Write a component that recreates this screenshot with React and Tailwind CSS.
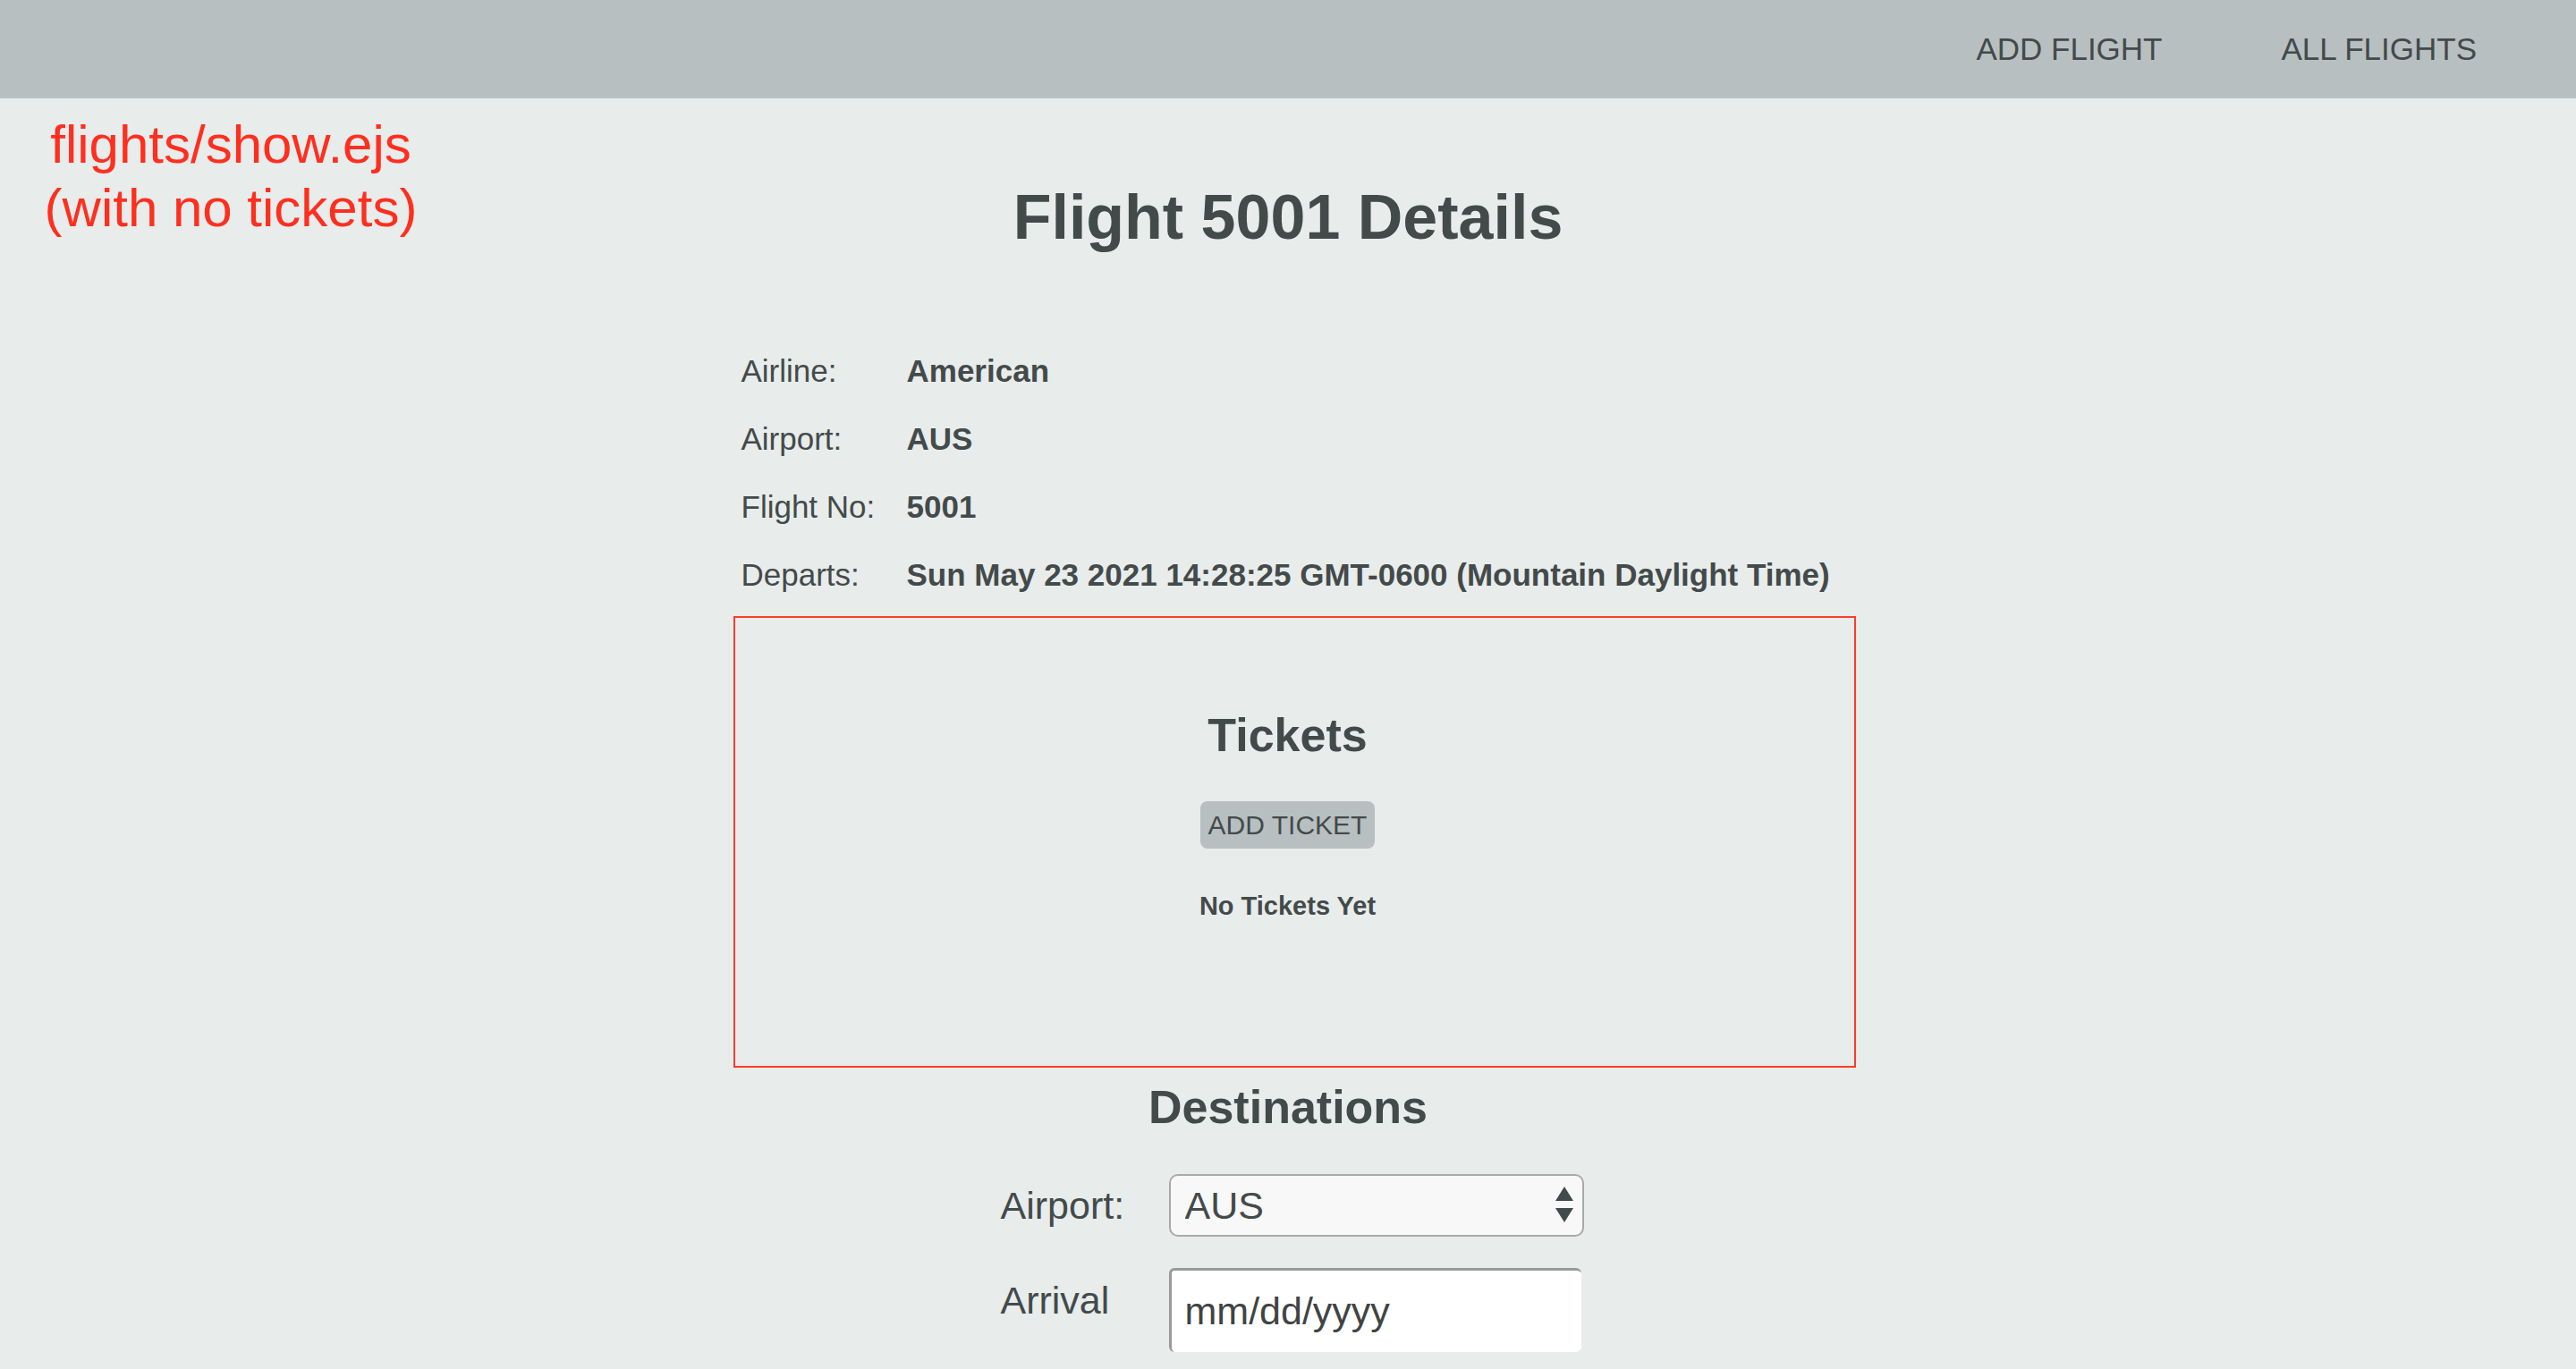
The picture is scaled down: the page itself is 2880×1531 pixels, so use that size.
import React from "react";

export default function App() {
  const font = { fontFamily: '"Liberation Sans", Arial, Helvetica, sans-serif' };
  return (
    <div
      className="relative h-[1531px] w-full overflow-hidden bg-[#e8eceb] text-[#434a4a]"
      style={font}
    >
      <nav className="flex h-[110px] items-center justify-end gap-[133px] bg-[#b8bfc1] pr-[111px] text-[35px] leading-[40px]">
        <a className="cursor-pointer">ADD FLIGHT</a>
        <a className="cursor-pointer">ALL FLIGHTS</a>
      </nav>

      <div className="absolute left-0 top-[126px] w-[516px] text-center text-[60px] leading-[71px] text-[#ff2f1f]">
        <div>flights/show.ejs</div>
        <div>(with no tickets)</div>
      </div>

      <main className="mx-auto w-[1223px]">
        <h1 className="mt-[93px] text-center text-[70px] font-bold leading-[80px]">
          Flight 5001 Details
        </h1>

        <section className="mt-[94px] grid grid-cols-[185px_auto] text-[35px] leading-[76px]">
          <div>Airline:</div>
          <div className="font-bold">American</div>
          <div>Airport:</div>
          <div className="font-bold">AUS</div>
          <div>Flight No:</div>
          <div className="font-bold">5001</div>
          <div>Departs:</div>
          <div className="font-bold">Sun May 23 2021 14:28:25 GMT-0600 (Mountain Daylight Time)</div>
        </section>

        <section className="-ml-[9px] -mr-[23px] mt-[8px] flex h-[505px] flex-col items-center border-2 border-[#ff3b2b] pr-[15px] pt-[101px]">
          <h2 className="text-[52px] font-bold leading-[60px]">Tickets</h2>
          <button className="mt-[44px] flex h-[53px] items-center rounded-[8px] bg-[#b8bfc1] px-[9px] text-[30px] leading-[34px] text-[#434a4a]">
            ADD TICKET
          </button>
          <p className="mt-[47px] text-[29px] font-bold leading-[34px]">No Tickets Yet</p>
        </section>

        <h2 className="mt-[14px] text-center text-[52px] font-bold leading-[60px]">Destinations</h2>

        <form className="ml-[290px] mt-[45px] grid grid-cols-[188px_464px] gap-y-[35px] text-[43px]">
          <label className="self-center leading-[50px]">Airport:</label>
          <div className="relative h-[70px]">
            <select
              className="h-[70px] w-[464px] appearance-none rounded-[10px] border-2 border-[#a9a9a9] bg-[#f8f8f8] pl-[16px] text-[43px] leading-[50px] text-[#434a4a] outline-none"
              style={font}
              defaultValue="AUS"
            >
              <option>AUS</option>
              <option>DAL</option>
              <option>LAX</option>
              <option>SAN</option>
              <option>SEA</option>
            </select>
            <svg
              className="pointer-events-none absolute right-[12px] top-[14px]"
              width="20"
              height="40"
              viewBox="0 0 20 40"
            >
              <polygon points="10,0 20,16 0,16" fill="#434a4a" />
              <polygon points="0,24 20,24 10,40" fill="#434a4a" />
            </svg>
          </div>

          <label className="pt-[11px] leading-[50px]">Arrival</label>
          <input
            type="text"
            readOnly
            value="mm/dd/yyyy"
            className="h-[94px] w-[461px] rounded-[6px] border-l-[3px] border-t-[3px] border-[#9a9a9a] bg-white pl-[15px] text-[43px] text-[#3f4444] outline-none"
            style={font}
          />
        </form>
      </main>
    </div>
  );
}
